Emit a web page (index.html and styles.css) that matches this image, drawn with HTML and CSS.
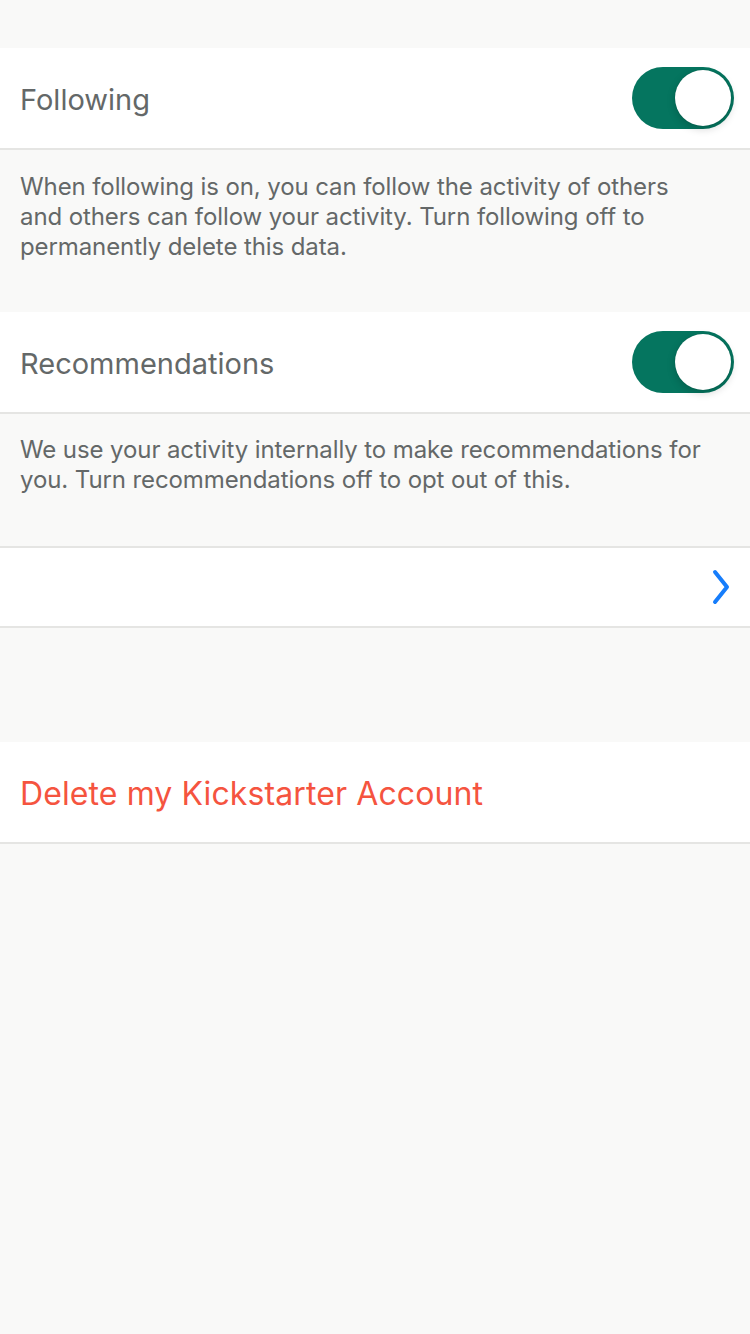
FILE: index.html
```html
<!DOCTYPE html>
<html>
<head>
<meta charset="utf-8">
<link rel="stylesheet" href="styles.css">
</head>
<body>
<div class="page">
  <div class="spacer-top"></div>
  <div class="row">
    <span class="label">Following</span>
    <div class="toggle on"><div class="knob"></div></div>
  </div>
  <div class="note">When following is on, you can follow the activity of others and others can follow your activity. Turn following off to permanently delete this data.</div>
  <div class="row">
    <span class="label">Recommendations</span>
    <div class="toggle on"><div class="knob"></div></div>
  </div>
  <div class="note note-short">We use your activity internally to make recommendations for you. Turn recommendations off to opt out of this.</div>
  <div class="row row-link">
    <span class="label"></span>
    <svg class="chevron" width="18" height="36" viewBox="0 0 18 36"><path d="M3 3 L15 18 L3 33" fill="none" stroke="#167dfb" stroke-width="4" stroke-linecap="round" stroke-linejoin="round"/></svg>
  </div>
  <div class="gap"></div>
  <div class="row row-delete">
    <span class="label danger">Delete my Kickstarter Account</span>
  </div>
</div>
</body>
</html>
```
FILE: styles.css
```css
html, body {
  margin: 0;
  padding: 0;
  background: #f9f9f8;
}
.page {
  width: 750px;
  min-height: 1334px;
  background: #f9f9f8;
  font-family: "Inter", "Liberation Sans", sans-serif;
}
.spacer-top {
  height: 48px;
}
.row {
  height: 100px;
  background: #fff;
  border-bottom: 2px solid #e5e5e3;
  display: flex;
  align-items: center;
  justify-content: space-between;
  padding: 0 16px 0 20px;
}
.row-link {
  height: 78px;
  border-top: 2px solid #e5e5e3;
  padding-right: 20px;
}
.label {
  font-size: 29px;
  color: #646868;
  padding-top: 3px;
}
.danger {
  color: #f5543f;
  font-size: 32px;
  letter-spacing: 0.1px;
  padding-top: 2px;
}
.toggle {
  width: 102px;
  height: 62px;
  border-radius: 31px;
  background: #05755f;
  position: relative;
  flex: none;
}
.knob {
  position: absolute;
  top: 3px;
  right: 3px;
  width: 56px;
  height: 56px;
  border-radius: 50%;
  background: #fff;
  box-shadow: 0 3px 8px rgba(0,0,0,0.18), 0 0 1px rgba(0,0,0,0.2);
}
.note {
  height: 162px;
  box-sizing: border-box;
  padding: 22px 40px 0 20px;
  font-size: 24px;
  line-height: 30px;
  color: #646868;
  letter-spacing: -0.1px;
}
.note-short {
  height: 132px;
  padding-top: 21px;
}
.chevron {
  display: block;
}
.gap {
  height: 114px;
}
```
